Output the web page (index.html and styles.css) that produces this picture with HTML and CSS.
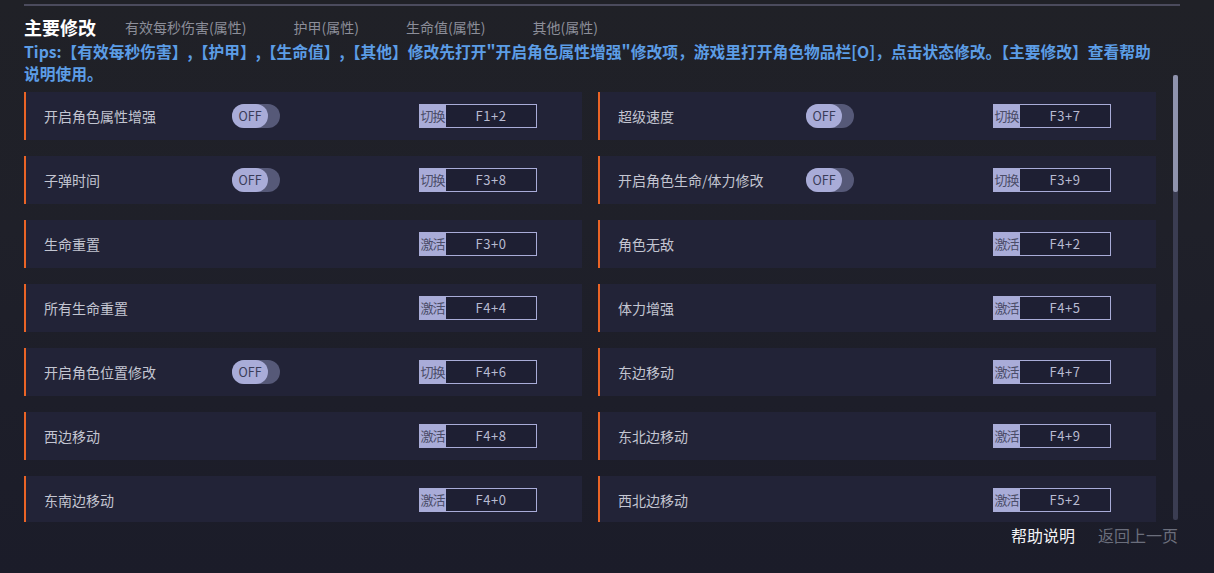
FILE: index.html
```html
<!DOCTYPE html>
<html lang="zh">
<head>
<meta charset="utf-8">
<link rel="stylesheet" href="styles.css">
</head>
<body>
<div class="page">
  <div class="topline"></div>
  <div class="header">
    <span class="title">主要修改</span>
    <span class="tab">有效每秒伤害(属性)</span>
    <span class="tab">护甲(属性)</span>
    <span class="tab">生命值(属性)</span>
    <span class="tab">其他(属性)</span>
  </div>
  <div class="tips"><span class="line">Tips:【有效每秒伤害】,【护甲】,【生命值】,【其他】修改先打开"开启角色属性增强"修改项，游戏里打开角色物品栏[O]，点击状态修改。【主要修改】查看帮助</span><br>说明使用。</div>
  <div class="listwrap">
    <div class="list">
      <div class="card"><span class="label">开启角色属性增强</span><span class="toggle"><span class="knob">OFF</span></span><span class="key"><span class="kl">切换</span><span class="kv">F1+2</span></span></div>
      <div class="card"><span class="label">超级速度</span><span class="toggle"><span class="knob">OFF</span></span><span class="key"><span class="kl">切换</span><span class="kv">F3+7</span></span></div>
      <div class="card"><span class="label">子弹时间</span><span class="toggle"><span class="knob">OFF</span></span><span class="key"><span class="kl">切换</span><span class="kv">F3+8</span></span></div>
      <div class="card"><span class="label">开启角色生命/体力修改</span><span class="toggle"><span class="knob">OFF</span></span><span class="key"><span class="kl">切换</span><span class="kv">F3+9</span></span></div>
      <div class="card"><span class="label">生命重置</span><span></span><span class="key"><span class="kl">激活</span><span class="kv">F3+0</span></span></div>
      <div class="card"><span class="label">角色无敌</span><span></span><span class="key"><span class="kl">激活</span><span class="kv">F4+2</span></span></div>
      <div class="card"><span class="label">所有生命重置</span><span></span><span class="key"><span class="kl">激活</span><span class="kv">F4+4</span></span></div>
      <div class="card"><span class="label">体力增强</span><span></span><span class="key"><span class="kl">激活</span><span class="kv">F4+5</span></span></div>
      <div class="card"><span class="label">开启角色位置修改</span><span class="toggle"><span class="knob">OFF</span></span><span class="key"><span class="kl">切换</span><span class="kv">F4+6</span></span></div>
      <div class="card"><span class="label">东边移动</span><span></span><span class="key"><span class="kl">激活</span><span class="kv">F4+7</span></span></div>
      <div class="card"><span class="label">西边移动</span><span></span><span class="key"><span class="kl">激活</span><span class="kv">F4+8</span></span></div>
      <div class="card"><span class="label">东北边移动</span><span></span><span class="key"><span class="kl">激活</span><span class="kv">F4+9</span></span></div>
      <div class="card"><span class="label">东南边移动</span><span></span><span class="key"><span class="kl">激活</span><span class="kv">F4+0</span></span></div>
      <div class="card"><span class="label">西北边移动</span><span></span><span class="key"><span class="kl">激活</span><span class="kv">F5+2</span></span></div>
    </div>
    <div class="scrollbar"><div class="thumb"></div></div>
  </div>
  <div class="footer">
    <span class="help">帮助说明</span>
    <span class="back">返回上一页</span>
  </div>
</div>
</body>
</html>
```
FILE: styles.css
```css
html, body {
  margin: 0;
  padding: 0;
}
body {
  width: 1214px;
  height: 573px;
  overflow: hidden;
  background: linear-gradient(180deg, #202127 0%, #1f2029 40%, #1b1c29 100%);
  font-family: "Noto Sans CJK SC", "Noto Sans", sans-serif;
  color: #c5c7d3;
}
.page {
  padding: 4px 0 0 24px;
  width: 1156px;
}
.topline {
  height: 2px;
  background: #4b4b5d;
}
.header {
  display: flex;
  align-items: center;
  margin-top: 10px;
  height: 22px;
}
.title {
  font-size: 18px;
  font-weight: bold;
  color: #ffffff;
  line-height: 22px;
  margin-right: 29px;
}
.tab {
  font-size: 14px;
  color: #8c8e99;
  line-height: 22px;
  margin-right: 47px;
}
.tips {
  margin-top: 3px;
  font-size: 15.75px;
  font-weight: bold;
  color: #5c9de6;
  line-height: 22px;
  white-space: nowrap;
}
.listwrap {
  display: flex;
  margin-top: -10px;
  height: 447px;
}
.list {
  display: grid;
  grid-template-columns: 558px 558px;
  column-gap: 16px;
  row-gap: 16px;
  grid-auto-rows: 48px;
  padding-top: 17px;
  overflow: hidden;
  height: 430px;
  width: 1132px;
}
.card {
  background: #222337;
  border-left: 2px solid #ea6426;
  display: grid;
  grid-template-columns: 188px 187px auto;
  align-items: center;
  padding-left: 18px;
}
.label {
  font-size: 14px;
  color: #c3c5d1;
  white-space: nowrap;
}
.toggle {
  width: 48px;
  height: 24px;
  border-radius: 12px;
  background: #565978;
  display: flex;
}
.knob {
  width: 36px;
  height: 24px;
  border-radius: 12px;
  background: #a9acd8;
  color: #3a3c58;
  font-size: 12.5px;
  line-height: 24px;
  text-align: center;
}
.key {
  display: flex;
  width: 118px;
  height: 24px;
}
.kl {
  width: 27px;
  flex: none;
  overflow: hidden;
  background: #a9acd8;
  color: #4b4d68;
  font-size: 13px;
  line-height: 24px;
  text-align: center;
  letter-spacing: -1px;
  white-space: nowrap;
}
.kv {
  flex: 1;
  border: 1px solid #a9acd8;
  border-left: none;
  background: #1e1f33;
  color: #b9bbd1;
  font-size: 13px;
  line-height: 22px;
  text-align: center;
  letter-spacing: 0.6px;
}
.scrollbar {
  margin-left: 17px;
  width: 5px;
  height: 445px;
  background: #3b3d52;
  border-radius: 2px;
}
.thumb {
  height: 117px;
  background: #8f93ad;
  border-radius: 2px;
}
.footer {
  display: flex;
  justify-content: flex-end;
  gap: 23px;
  width: 1154px;
  margin-top: 1px;
  font-size: 16px;
  line-height: 24px;
}
.help {
  color: #f2f2f5;
}
.back {
  color: #6b6e7c;
}
```
